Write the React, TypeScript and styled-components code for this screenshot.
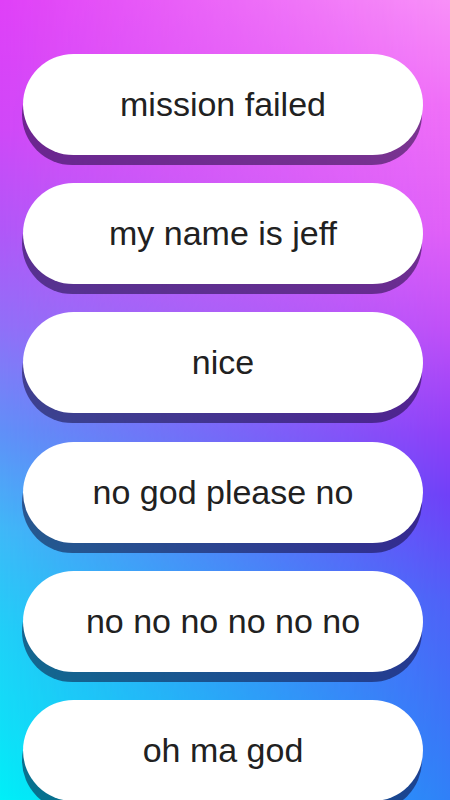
import styled, { createGlobalStyle } from "styled-components";

const GlobalStyle = createGlobalStyle`
    html, body {
        margin: 0;
        padding: 0;
    }

    body {
        font-family: "Liberation Sans", Arial, sans-serif;
    }
`;

const Screen = styled.div`
    position: relative;
    width: 450px;
    height: 800px;
    overflow: hidden;
    background: linear-gradient(
        to bottom,
        #e040f8 0%,
        #d048f8 16%,
        #b058f8 29%,
        #9070f8 41%,
        #6090f8 54%,
        #40b8f8 66%,
        #20d0f8 79%,
        #10e0f8 91%,
        #00f0f8 100%
    );

    &::before {
        content: "";
        position: absolute;
        inset: 0;
        background: linear-gradient(
            to bottom,
            #f890f8 0%,
            #f070f8 13%,
            #e060f8 29%,
            #c050f8 41%,
            #9040f8 54%,
            #7040f8 62%,
            #5060f8 75%,
            #4070f8 87%,
            #3080f8 100%
        );
        -webkit-mask-image: linear-gradient(to right, transparent, #000);
        mask-image: linear-gradient(to right, transparent, #000);
    }
`;

const ButtonList = styled.div`
    position: relative;
    display: flex;
    flex-direction: column;
    gap: 28.2px;
    padding: 54px 27px 0 23px;
`;

const SoundButton = styled.button`
    display: flex;
    align-items: center;
    justify-content: center;
    flex-shrink: 0;
    width: 400px;
    height: 101px;
    padding: 0;
    border: none;
    border-radius: 51px;
    background: #ffffff;
    box-shadow: -1px 10px 0 rgba(10, 0, 40, 0.5);
    color: #212121;
    font-family: "Liberation Sans", Arial, sans-serif;
    font-size: 34px;
    cursor: pointer;
`;

const sounds = [
    "mission failed",
    "my name is jeff",
    "nice",
    "no god please no",
    "no no no no no no",
    "oh ma god",
];

function App() {
    return (
        <>
            <GlobalStyle />
            <Screen>
                <ButtonList>
                    {sounds.map((label) => (
                        <SoundButton key={label}>{label}</SoundButton>
                    ))}
                </ButtonList>
            </Screen>
        </>
    );
}

export default App;
